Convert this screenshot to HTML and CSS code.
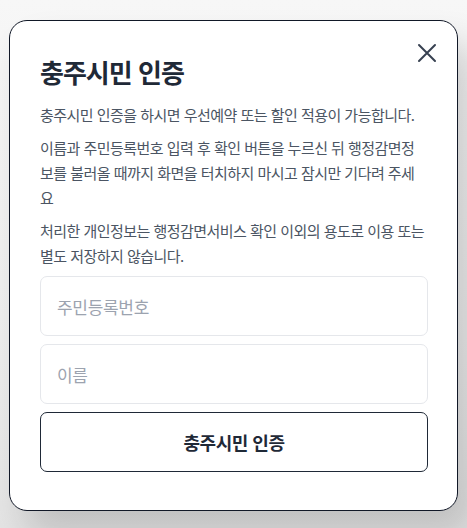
FILE: index.html
```html
<!DOCTYPE html>
<html lang="ko">
<head>
<meta charset="utf-8">
<title>충주시민 인증</title>
<link rel="stylesheet" href="styles.css">
</head>
<body>
<div class="modal">
  <button class="close" aria-label="닫기">
    <svg width="20" height="20" viewBox="0 0 20 20"><path d="M2 2 L18 18 M18 2 L2 18" stroke="#374151" stroke-width="2" stroke-linecap="round" fill="none"/></svg>
  </button>
  <h1 class="title">충주시민 인증</h1>
  <div class="desc">
    <p>충주시민 인증을 하시면 우선예약 또는 할인 적용이 가능합니다.</p>
    <p>이름과 주민등록번호 입력 후 확인 버튼을 누르신 뒤 행정감면정보를 불러올 때까지 화면을 터치하지 마시고 잠시만 기다려 주세요</p>
    <p>처리한 개인정보는 행정감면서비스 확인 이외의 용도로 이용 또는 별도 저장하지 않습니다.</p>
  </div>
  <div class="form">
    <input class="field" type="text" placeholder="주민등록번호">
    <input class="field" type="text" placeholder="이름">
    <button class="submit">충주시민 인증</button>
  </div>
</div>
</body>
</html>
```
FILE: styles.css
```css
html, body {
  margin: 0;
  padding: 0;
}
body {
  width: 467px;
  height: 528px;
  overflow: hidden;
  background: linear-gradient(180deg, #f7f7f7 0%, #eeeeee 60%, #e4e4e4 100%);
  font-family: "Noto Sans CJK KR", "Noto Sans", sans-serif;
  padding: 20px 0 0 9px;
  box-sizing: border-box;
}
.modal {
  position: relative;
  width: 449px;
  height: 491px;
  box-sizing: border-box;
  background: #fff;
  border: 1px solid #111827;
  border-radius: 18px;
  padding: 30px 29px 0 30px;
  box-shadow: 16px 24px 36px rgba(0, 0, 0, 0.16);
}
.close {
  position: absolute;
  top: 22px;
  right: 20px;
  width: 20px;
  height: 20px;
  padding: 0;
  border: 0;
  background: none;
  display: flex;
}
.title {
  margin: 0;
  font-size: 26px;
  font-weight: 700;
  line-height: 42px;
  color: #1f2937;
  letter-spacing: -1px;
}
.desc {
  margin-top: 9px;
  width: 385px;
}
.desc p {
  margin: 0 0 8px;
  font-size: 15px;
  line-height: 25px;
  color: #4b5563;
  letter-spacing: -0.53px;
}
.form {
  margin-top: 3px;
  display: flex;
  flex-direction: column;
  gap: 8px;
}
.field {
  height: 60px;
  box-sizing: border-box;
  border: 1px solid #e5e7eb;
  border-radius: 7px;
  padding: 0 16px;
  font-family: inherit;
  font-size: 17px;
  color: #111827;
  background: #fff;
  outline: none;
}
.field::placeholder {
  color: #9ca3af;
  letter-spacing: -0.3px;
}
.submit {
  height: 60px;
  box-sizing: border-box;
  border: 1px solid #1f2937;
  border-radius: 7px;
  background: #fff;
  font-family: inherit;
  font-size: 18px;
  font-weight: 700;
  color: #1f2937;
  letter-spacing: -0.5px;
}
```
